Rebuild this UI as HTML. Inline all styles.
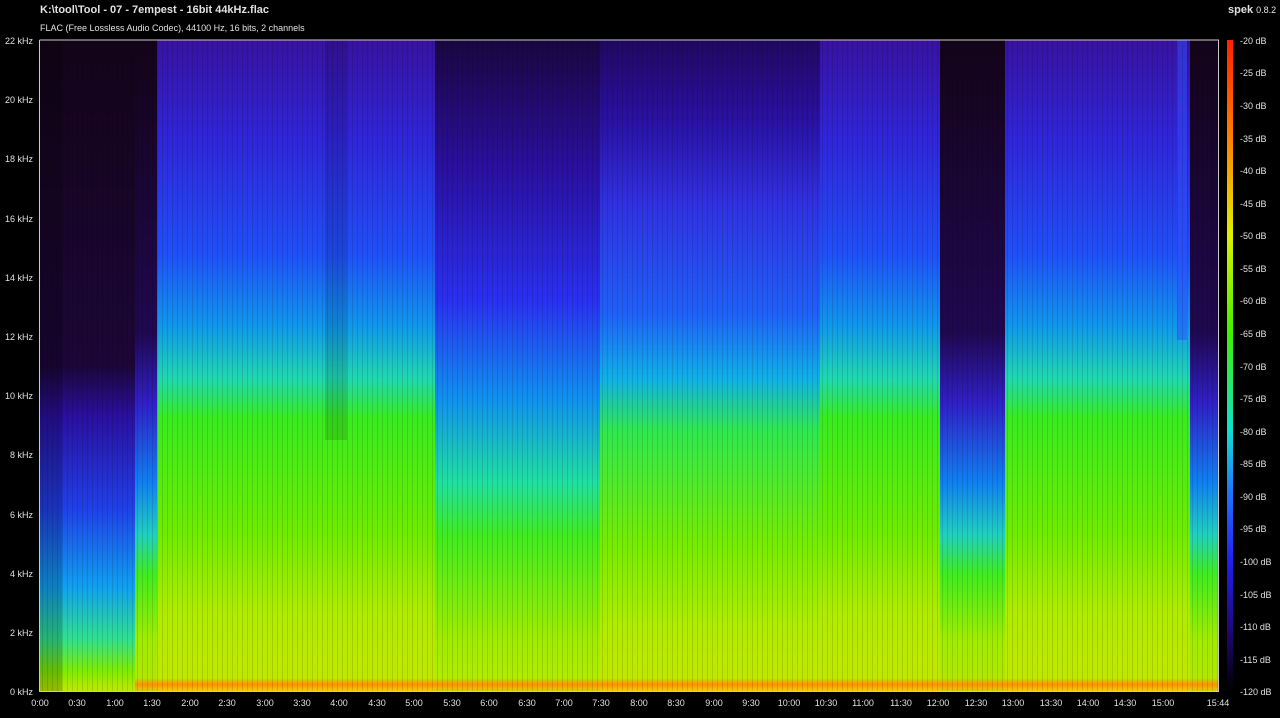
<!DOCTYPE html>
<html><head><meta charset="utf-8"><style>
html,body{margin:0;padding:0;background:#000;width:1280px;height:718px;overflow:hidden}
svg{display:block}
text{font-family:"Liberation Sans",Arial,sans-serif;fill:#e0e0e0}
</style></head><body>
<svg width="1280" height="718" xmlns="http://www.w3.org/2000/svg">
<defs>
<linearGradient id="loud" x1="0" y1="0" x2="0" y2="1">
<stop offset="0" stop-color="#3812a0"/><stop offset="0.15" stop-color="#3025d8"/>
<stop offset="0.33" stop-color="#2050f8"/><stop offset="0.44" stop-color="#1098ec"/>
<stop offset="0.52" stop-color="#20d8b0"/><stop offset="0.58" stop-color="#38ec20"/>
<stop offset="0.76" stop-color="#70ec00"/><stop offset="0.88" stop-color="#b0ec00"/>
<stop offset="0.98" stop-color="#c0e800"/><stop offset="0.99" stop-color="#ff9000"/>
<stop offset="1" stop-color="#f0d000"/></linearGradient>
<linearGradient id="loud2" x1="0" y1="0" x2="0" y2="1">
<stop offset="0" stop-color="#200860"/><stop offset="0.12" stop-color="#2a10a0"/>
<stop offset="0.25" stop-color="#3030e0"/><stop offset="0.42" stop-color="#2060f8"/>
<stop offset="0.52" stop-color="#10b0e8"/><stop offset="0.6" stop-color="#30e850"/>
<stop offset="0.78" stop-color="#78ec00"/><stop offset="0.9" stop-color="#b0ec00"/>
<stop offset="0.98" stop-color="#c0e800"/><stop offset="0.99" stop-color="#ff9000"/>
<stop offset="1" stop-color="#f0d000"/></linearGradient>
<linearGradient id="mid" x1="0" y1="0" x2="0" y2="1">
<stop offset="0" stop-color="#1a0640"/><stop offset="0.2" stop-color="#2a10a0"/>
<stop offset="0.4" stop-color="#2a30f0"/><stop offset="0.55" stop-color="#1090f0"/>
<stop offset="0.68" stop-color="#20e0a0"/><stop offset="0.76" stop-color="#40ec20"/>
<stop offset="0.92" stop-color="#a0ec00"/><stop offset="0.98" stop-color="#b0ec00"/>
<stop offset="0.99" stop-color="#ff9000"/><stop offset="1" stop-color="#e0d000"/></linearGradient>
<linearGradient id="quiet" x1="0" y1="0" x2="0" y2="1">
<stop offset="0" stop-color="#140418"/><stop offset="0.5" stop-color="#1c0638"/>
<stop offset="0.58" stop-color="#2a10a0"/><stop offset="0.72" stop-color="#2040e8"/>
<stop offset="0.84" stop-color="#10a0f0"/><stop offset="0.92" stop-color="#30e090"/>
<stop offset="0.97" stop-color="#80ec00"/><stop offset="1" stop-color="#c0e800"/></linearGradient>
<linearGradient id="quiet2" x1="0" y1="0" x2="0" y2="1">
<stop offset="0" stop-color="#140418"/><stop offset="0.45" stop-color="#200850"/>
<stop offset="0.56" stop-color="#3020c8"/><stop offset="0.68" stop-color="#1080f0"/>
<stop offset="0.76" stop-color="#20d0c0"/><stop offset="0.82" stop-color="#40ec20"/>
<stop offset="0.92" stop-color="#a0ec00"/><stop offset="0.98" stop-color="#b0e800"/>
<stop offset="0.99" stop-color="#ff9000"/><stop offset="1" stop-color="#e0d000"/></linearGradient>
<linearGradient id="bar" x1="0" y1="0" x2="0" y2="1">
<stop offset="0" stop-color="#ff2000"/><stop offset="0.15" stop-color="#ff8000"/>
<stop offset="0.3" stop-color="#e0f000"/><stop offset="0.45" stop-color="#40f000"/>
<stop offset="0.6" stop-color="#10e0d0"/><stop offset="0.7" stop-color="#2070ff"/>
<stop offset="0.8" stop-color="#2020f0"/><stop offset="0.9" stop-color="#200880"/>
<stop offset="1" stop-color="#000000"/></linearGradient>
<pattern id="stripes" width="5" height="651" patternUnits="userSpaceOnUse">
<rect x="2" width="1" height="651" fill="#000" opacity="0.12"/></pattern>
</defs>
<text x="40" y="13" font-size="11" font-weight="bold" fill="#fff">K:\tool\Tool - 07 - 7empest - 16bit 44kHz.flac</text>
<text x="40" y="31" font-size="9" fill="#ddd">FLAC (Free Lossless Audio Codec), 44100 Hz, 16 bits, 2 channels</text>
<text x="1228" y="13" font-size="11" font-weight="bold" fill="#fff">spek <tspan font-weight="normal" font-size="9">0.8.2</tspan></text>
<g>
<rect x="40" y="40" width="117" height="651" fill="url(#quiet)"/>
<rect x="40" y="40" width="22" height="651" fill="#000" opacity="0.2"/>
<rect x="135" y="40" width="22" height="651" fill="url(#quiet2)"/>
<rect x="157" y="40" width="278" height="651" fill="url(#loud)"/>
<rect x="435" y="40" width="165" height="651" fill="url(#mid)"/>
<rect x="600" y="40" width="220" height="651" fill="url(#loud2)"/>
<rect x="820" y="40" width="120" height="651" fill="url(#loud)"/>
<rect x="940" y="40" width="65" height="651" fill="url(#quiet2)"/>
<rect x="1005" y="40" width="170" height="651" fill="url(#loud)"/>
<rect x="1175" y="40" width="15" height="651" fill="url(#loud)"/>
<rect x="1177" y="40" width="10" height="300" fill="#3050ff" opacity="0.5"/>
<rect x="1190" y="40" width="28" height="651" fill="url(#quiet2)"/>
<rect x="325" y="40" width="22" height="400" fill="#000" opacity="0.12"/>
<rect x="40" y="40" width="1178" height="651" fill="url(#stripes)"/>
</g>
<rect x="1227" y="40" width="6" height="651" fill="url(#bar)"/>
<g stroke="#c8c8c8" fill="none" stroke-width="1">
<path d="M39.5 40V691.5H1218.5V40H39.5"/>
</g>
<g font-size="9" text-anchor="end">
<text x="33" y="44">22 kHz</text><text x="33" y="103">20 kHz</text><text x="33" y="162">18 kHz</text>
<text x="33" y="222">16 kHz</text><text x="33" y="281">14 kHz</text><text x="33" y="340">12 kHz</text>
<text x="33" y="399">10 kHz</text><text x="33" y="458">8 kHz</text><text x="33" y="518">6 kHz</text>
<text x="33" y="577">4 kHz</text><text x="33" y="636">2 kHz</text><text x="33" y="695">0 kHz</text>
</g>
<g font-size="9" text-anchor="middle">
<text x="40" y="706">0:00</text><text x="77" y="706">0:30</text><text x="115" y="706">1:00</text>
<text x="152" y="706">1:30</text><text x="190" y="706">2:00</text><text x="227" y="706">2:30</text>
<text x="265" y="706">3:00</text><text x="302" y="706">3:30</text><text x="339" y="706">4:00</text>
<text x="377" y="706">4:30</text><text x="414" y="706">5:00</text><text x="452" y="706">5:30</text>
<text x="489" y="706">6:00</text><text x="527" y="706">6:30</text><text x="564" y="706">7:00</text>
<text x="601" y="706">7:30</text><text x="639" y="706">8:00</text><text x="676" y="706">8:30</text>
<text x="714" y="706">9:00</text><text x="751" y="706">9:30</text><text x="789" y="706">10:00</text>
<text x="826" y="706">10:30</text><text x="863" y="706">11:00</text><text x="901" y="706">11:30</text>
<text x="938" y="706">12:00</text><text x="976" y="706">12:30</text><text x="1013" y="706">13:00</text>
<text x="1051" y="706">13:30</text><text x="1088" y="706">14:00</text><text x="1125" y="706">14:30</text>
<text x="1163" y="706">15:00</text><text x="1218" y="706">15:44</text>
</g>
<g font-size="9">
<text x="1240" y="44">-20 dB</text><text x="1240" y="76">-25 dB</text><text x="1240" y="109">-30 dB</text>
<text x="1240" y="142">-35 dB</text><text x="1240" y="174">-40 dB</text><text x="1240" y="207">-45 dB</text>
<text x="1240" y="239">-50 dB</text><text x="1240" y="272">-55 dB</text><text x="1240" y="304">-60 dB</text>
<text x="1240" y="337">-65 dB</text><text x="1240" y="370">-70 dB</text><text x="1240" y="402">-75 dB</text>
<text x="1240" y="435">-80 dB</text><text x="1240" y="467">-85 dB</text><text x="1240" y="500">-90 dB</text>
<text x="1240" y="532">-95 dB</text><text x="1240" y="565">-100 dB</text><text x="1240" y="598">-105 dB</text>
<text x="1240" y="630">-110 dB</text><text x="1240" y="663">-115 dB</text><text x="1240" y="695">-120 dB</text>
</g>
</svg>
</body></html>
